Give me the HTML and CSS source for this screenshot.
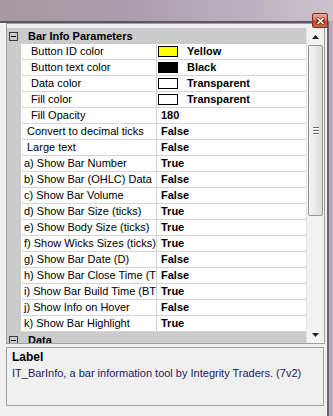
FILE: index.html
```html
<!DOCTYPE html>
<html>
<head>
<meta charset="utf-8">
<link rel="stylesheet" href="styles.css">
</head>
<body>
<div class="titlebar">
  <div class="close">
    <svg width="9" height="8" viewBox="0 0 9 8"><path d="M1 1 L8 7 M8 1 L1 7" stroke="#5a1a10" stroke-width="3"/><path d="M1.5 1.2 L7.5 6.8 M7.5 1.2 L1.5 6.8" stroke="#ffffff" stroke-width="1.6"/></svg>
  </div>
</div>
<div class="frame">
  <div class="grid">
    <div class="rows">
      <div class="cat"><span class="minus"></span><span class="cattext">Bar Info Parameters</span></div>
      <div class="row"><div class="mg"></div><div class="name ind2">Button ID color</div><div class="value"><span class="swatch yellow"></span><span class="vt sw">Yellow</span></div></div>
      <div class="row"><div class="mg"></div><div class="name ind2">Button text color</div><div class="value"><span class="swatch black"></span><span class="vt sw">Black</span></div></div>
      <div class="row"><div class="mg"></div><div class="name ind2">Data color</div><div class="value"><span class="swatch"></span><span class="vt sw">Transparent</span></div></div>
      <div class="row"><div class="mg"></div><div class="name ind2">Fill color</div><div class="value"><span class="swatch"></span><span class="vt sw">Transparent</span></div></div>
      <div class="row"><div class="mg"></div><div class="name ind2">Fill Opacity</div><div class="value"><span class="vt">180</span></div></div>
      <div class="row"><div class="mg"></div><div class="name ind1">Convert to decimal ticks</div><div class="value"><span class="vt">False</span></div></div>
      <div class="row"><div class="mg"></div><div class="name ind1">Large text</div><div class="value"><span class="vt">False</span></div></div>
      <div class="row"><div class="mg"></div><div class="name">a) Show Bar Number</div><div class="value"><span class="vt">True</span></div></div>
      <div class="row"><div class="mg"></div><div class="name">b) Show Bar (OHLC) Data</div><div class="value"><span class="vt">False</span></div></div>
      <div class="row"><div class="mg"></div><div class="name">c) Show Bar Volume</div><div class="value"><span class="vt">False</span></div></div>
      <div class="row"><div class="mg"></div><div class="name">d) Show Bar Size (ticks)</div><div class="value"><span class="vt">True</span></div></div>
      <div class="row"><div class="mg"></div><div class="name">e) Show Body Size (ticks)</div><div class="value"><span class="vt">True</span></div></div>
      <div class="row"><div class="mg"></div><div class="name">f) Show Wicks Sizes (ticks)</div><div class="value"><span class="vt">True</span></div></div>
      <div class="row"><div class="mg"></div><div class="name">g) Show Bar Date (D)</div><div class="value"><span class="vt">False</span></div></div>
      <div class="row"><div class="mg"></div><div class="name">h) Show Bar Close Time (T)</div><div class="value"><span class="vt">False</span></div></div>
      <div class="row"><div class="mg"></div><div class="name">i) Show Bar Build Time (BT)</div><div class="value"><span class="vt">True</span></div></div>
      <div class="row"><div class="mg"></div><div class="name">j) Show Info on Hover</div><div class="value"><span class="vt">False</span></div></div>
      <div class="row"><div class="mg"></div><div class="name">k) Show Bar Highlight</div><div class="value"><span class="vt">True</span></div></div>
      <div class="cat"><span class="minus"></span><span class="cattext">Data</span></div>
    </div>
    <div class="scrollbar">
      <div class="sbtn"><svg width="7" height="4" viewBox="0 0 7 4"><polygon points="3.5,0 7,4 0,4" fill="#222"/></svg></div>
      <div class="track">
        <div class="thumb">
          <div class="grip"><span></span><span></span><span></span></div>
        </div>
      </div>
      <div class="sbtn"><svg width="7" height="4" viewBox="0 0 7 4"><polygon points="0,0 7,0 3.5,4" fill="#222"/></svg></div>
    </div>
  </div>
  <div class="desc">
    <div class="dtitle">Label</div>
    <div class="dtext">IT_BarInfo, a bar information tool by Integrity Traders. (7v2)</div>
  </div>
</div>
</body>
</html>
```

FILE: styles.css
```css
html, body {
  margin: 0;
  padding: 0;
}
body {
  width: 333px;
  height: 416px;
  overflow: hidden;
  background: #b7abb9;
  font-family: "Liberation Sans", Arial, sans-serif;
  font-size: 11px;
  color: #000;
}
.titlebar {
  height: 21px;
  position: relative;
  background: linear-gradient(to right, #a6999f 0%, #ab9fae 40%, #bcb1be 75%, #cbc3cd 100%);
}
.close {
  position: absolute;
  left: 312px;
  top: 13px;
  width: 14px;
  height: 13px;
  border: 1px solid #7c3024;
  border-radius: 2px;
  background: linear-gradient(to bottom, #eea795 0%, #df7c65 45%, #c8432c 55%, #d2644a 100%);
  display: flex;
  align-items: center;
  justify-content: center;
  z-index: 2;
}
.frame {
  width: 327px;
  height: 393px;
  border-top: 2px solid #5e5462;
  border-right: 2px solid #6e6272;
  background: #f0f0f0;
}
.grid {
  box-sizing: border-box;
  margin-left: 6px;
  width: 319px;
  height: 321px;
  border: 1px solid #a0a0a0;
  padding-top: 4px;
  display: flex;
  background: #f0f0f0;
}
.rows {
  width: 299px;
  height: 315px;
  overflow: hidden;
  background: #fff;
}
.cat {
  height: 16px;
  background: #cbcbcb;
  display: flex;
  align-items: center;
}
.minus {
  box-sizing: border-box;
  width: 9px;
  height: 9px;
  margin-left: 2px;
  border: 1px solid #3a3a3a;
  position: relative;
  flex: none;
}
.minus::after {
  content: "";
  position: absolute;
  left: 1px;
  top: 3px;
  width: 5px;
  height: 1px;
  background: #000;
}
.cattext {
  margin-left: 10px;
  font-weight: bold;
  line-height: 15px;
}
.row {
  display: grid;
  grid-template-columns: 14px 136px 149px;
  height: 16px;
}
.mg {
  background: #cbcbcb;
}
.name {
  box-sizing: border-box;
  border-right: 1px solid #d5d5d5;
  border-bottom: 1px solid #d5d5d5;
  padding-left: 3px;
  line-height: 15px;
  white-space: nowrap;
  overflow: hidden;
}
.name.ind1 {
  padding-left: 6px;
}
.name.ind2 {
  padding-left: 10px;
}
.value {
  box-sizing: border-box;
  border-bottom: 1px solid #d5d5d5;
  display: flex;
  align-items: center;
  line-height: 15px;
  white-space: nowrap;
  overflow: hidden;
}
.swatch {
  box-sizing: border-box;
  width: 20px;
  height: 11px;
  margin-left: 1px;
  border: 1px solid #000;
  background: #fff;
  flex: none;
}
.swatch.yellow {
  background: #ffff00;
}
.swatch.black {
  background: #000;
}
.vt {
  font-weight: bold;
  padding-left: 4px;
}
.vt.sw {
  padding-left: 9px;
}
.scrollbar {
  width: 18px;
  height: 315px;
  display: flex;
  flex-direction: column;
  background: #f2f2f2;
  border-left: 1px solid #e4e4e4;
  box-sizing: border-box;
}
.sbtn {
  height: 17px;
  display: flex;
  align-items: center;
  justify-content: center;
  flex: none;
}
.track {
  flex: 1;
  padding: 0 1px;
}
.thumb {
  box-sizing: border-box;
  height: 171px;
  border: 1px solid #979797;
  border-radius: 2px;
  background: linear-gradient(to right, #f3f3f3 0%, #e8e8e8 50%, #d9d9d9 100%);
  display: flex;
  align-items: center;
  justify-content: center;
}
.grip {
  display: flex;
  flex-direction: column;
  gap: 1px;
}
.grip span {
  display: block;
  width: 6px;
  height: 1px;
  background: #6a6a6a;
  border-bottom: 1px solid #fff;
}
.desc {
  box-sizing: border-box;
  margin-top: 3px;
  margin-left: 6px;
  width: 318px;
  height: 59px;
  border: 1px solid #a0a0a0;
  padding: 2px 5px;
  background: #f0f0f0;
}
.dtitle {
  font-weight: bold;
  font-size: 12px;
  line-height: 14px;
}
.dtext {
  margin-top: 2px;
  line-height: 15px;
  color: #1c1a5e;
  white-space: nowrap;
}
```
